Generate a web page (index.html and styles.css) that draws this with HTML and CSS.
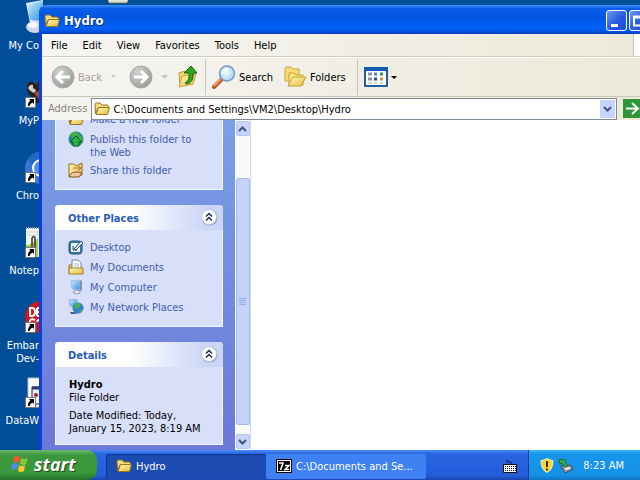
FILE: index.html
```html
<!DOCTYPE html>
<html lang="en">
<head>
    <meta charset="UTF-8">
    <meta name="viewport" content="width=device-width, initial-scale=1.0">
    <title>Hydro</title>
    <link rel="stylesheet" href="styles.css">
</head>
<body>
<!-- shared symbols -->
<svg class="defs" aria-hidden="true">
    <linearGradient id="gFolder" x1="0" y1="0" x2="1" y2="1">
        <stop offset="0" stop-color="#fffbb8"/><stop offset="1" stop-color="#e9b83e"/>
    </linearGradient>
    <radialGradient id="gGray" cx=".35" cy=".3" r=".8">
        <stop offset="0" stop-color="#d2d2cf"/><stop offset="1" stop-color="#989898"/>
    </radialGradient>
    <radialGradient id="gLens" cx=".4" cy=".4" r=".7">
        <stop offset="0" stop-color="#f4fdff"/><stop offset="1" stop-color="#9dcff2"/>
    </radialGradient>
    <linearGradient id="gScreen" x1="0" y1="0" x2="1" y2="1">
        <stop offset="0" stop-color="#d4f5ff"/><stop offset="1" stop-color="#2a8ce4"/>
    </linearGradient>
    <symbol id="folder" viewBox="0 0 16 16">
        <path d="M1 3.5Q1 2 2.5 2H6l2 2h5q1.500 0 1.500 1.500V7H4l-2.500 5.500Z" fill="#f6dc78" stroke="#94701e"/>
        <path d="M4.500 6.500h11l-2 7H2Z" fill="url(#gFolder)" stroke="#9a7420"/>
    </symbol>
    <symbol id="shortcut" viewBox="0 0 11 11">
        <path d="M.5.5h10v10H.5Z" fill="#fff" stroke="#777"/>
        <path d="M4 2h5v5L7.500 5.500Q5 6.500 4.500 9L3 9Q2.500 5.500 5.500 3.500Z" fill="#000"/>
    </symbol>
    <symbol id="chevrons" viewBox="0 0 18 18">
        <circle cx="9.500" cy="9.500" r="8" fill="#8d9ac0"/>
        <circle cx="9" cy="9" r="7.500" fill="#fff" stroke="#c3cbe0"/>
        <path d="M6 8.500l3-3 3 3M6 12.500l3-3 3 3" fill="none" stroke="#1c2a56" stroke-width="1.500"/>
    </symbol>
</svg>

<div class="desktop">
    <div class="workspace">
        <nav class="shortcuts" aria-label="Desktop">
            <a class="shortcut" href="#">
                <svg width="32" height="34" viewBox="0 0 32 34"><path d="M1 3l17-3v26L5 23Z" fill="#e9eef5"/><path d="M2 4l16-3v20L5 20Z" fill="url(#gScreen)"/><ellipse cx="10" cy="27" rx="9" ry="6" fill="#d3d5ea"/><ellipse cx="8" cy="25" rx="5" ry="3" fill="#fbfbff"/></svg>
                <span>My Co</span>
            </a>
            <a class="shortcut" href="#">
                <svg width="32" height="34" viewBox="0 0 32 34"><path d="M2 12q1-7 6-5l4 3 2-6v24H9q1-5-3-7-5-3-4-9Z" fill="#2b211f"/><path d="M3 13q2-4 5-3v3l3 2q-1 4-4 2T3 13Z" fill="#d9d2c8"/><path d="M9 18l5-2v8Z" fill="#9a5636"/><use href="#shortcut" y="22" width="11" height="11"/></svg>
                <span>MyP</span>
            </a>
            <a class="shortcut" href="#">
                <svg width="32" height="34" viewBox="0 0 32 34"><circle cx="16" cy="18" r="16" fill="#3b76d5"/><path d="M3 9Q7 3 16 2v9Q9 12 9 20Z" fill="#2866c6"/><circle cx="16" cy="18" r="8" fill="#4c8df2" stroke="#fff" stroke-width="2"/><use href="#shortcut" y="22" width="11" height="11"/></svg>
                <span>Chro</span>
            </a>
            <a class="shortcut" href="#">
                <svg width="32" height="34" viewBox="0 0 32 34"><path d="M1 3h28v29H1Z" fill="#f3f6ee"/><path d="M1 3h28" stroke="#999" stroke-width="2" stroke-dasharray="1 1"/><path d="M2 7h24M2 10h24" stroke="#cbd5cb"/><path d="M1 20q6 0 12-7v19H1Z" fill="#a7cf4b"/><path d="M7 22v-9q2-3 3 0v12" fill="none" stroke="#333" stroke-width="1.500"/><use href="#shortcut" y="22" width="11" height="11"/></svg>
                <span>Notep</span>
            </a>
            <a class="shortcut" href="#">
                <svg width="32" height="34" viewBox="0 0 32 34"><circle cx="16" cy="17" r="16" fill="#cf171d"/><path d="M5 8v8h2q3 0 3-4T7 8ZM12 8v8M12 8h5M12 12h4M12 16h5M10 20q-4-2-5 1t1 5M12 22q1-4 4 0" fill="none" stroke="#fff" stroke-width="2"/><use href="#shortcut" y="22" width="11" height="11"/></svg>
                <span>Embar<br>Dev-</span>
            </a>
            <a class="shortcut" href="#">
                <svg width="32" height="34" viewBox="0 0 32 34"><path d="M3 3h26v29H3Z" fill="#fff" stroke="#bbb"/><path d="M7 12h20v17H7Z" fill="#eef" stroke="#223"/><path d="M7 13h20" stroke="#2e3c68" stroke-width="3"/><circle cx="11" cy="20" r="2" fill="#a22"/><use href="#shortcut" y="22" width="11" height="11"/></svg>
                <span>DataW</span>
            </a>
        </nav>
        <svg class="peek" width="20" height="4" viewBox="0 0 20 4"><path d="M0 0h20l-1 3H1Z" fill="#e6e3cf"/><path d="M1 3h18" stroke="#6d7263"/></svg>

        <main class="window">
            <header class="titlebar">
                <svg width="16" height="16"><use href="#folder"/></svg>
                <h1>Hydro</h1>
                <button class="capBtn" aria-label="Minimize"><svg width="19" height="19"><path d="M4 13h7v3H4Z" fill="#fff"/></svg></button>
                <button class="capBtn" aria-label="Maximize"><svg width="19" height="19"><path d="M4 5.500h10v9H4ZM4 6.500h10" fill="none" stroke="#fff" stroke-width="2"/></svg></button>
                <button class="capBtn close" aria-label="Close"><svg width="19" height="19"><path d="M5 5l9 9M14 5l-9 9" stroke="#fff" stroke-width="2"/></svg></button>
            </header>

            <nav class="menubar">
                <button>File</button>
                <button>Edit</button>
                <button>View</button>
                <button>Favorites</button>
                <button>Tools</button>
                <button>Help</button>
                <div class="throbber"></div>
            </nav>

            <div class="toolbar">
                <button class="tool back" disabled>
                    <svg width="24" height="24"><circle cx="12" cy="12" r="11" fill="url(#gGray)" stroke="#aaa"/><path d="M19 12H7M12 6l-6 6 6 6" fill="none" stroke="#fff" stroke-width="3"/></svg>
                    Back
                </button>
                <svg class="drop off" width="7" height="4"><path d="M1 0h5L3.500 3Z"/></svg>
                <button class="tool" aria-label="Forward" disabled>
                    <svg width="24" height="24"><circle cx="12" cy="12" r="11" fill="url(#gGray)" stroke="#aaa"/><path d="M5 12h12M12 6l6 6-6 6" fill="none" stroke="#fff" stroke-width="3"/></svg>
                </button>
                <svg class="drop off" width="7" height="4"><path d="M0 0h7L3.500 4Z"/></svg>
                <button class="tool" aria-label="Up">
                    <svg width="20" height="24"><path d="M1 8l6-2 2 2 8-1v5L2 20Z" fill="#f3dc72" stroke="#b99a34"/><path d="M4 11l14-2-3 10-14 3Z" fill="url(#gFolder)" stroke="#c7a13a"/><path d="M7 18q5-2 4-10H6l7-7 6 7h-4q1 9-6 11Z" fill="#2fa41f" stroke="#14690f"/></svg>
                </button>
                <div class="divider"></div>
                <button class="tool">
                    <svg width="24" height="24"><path d="M2 22l8-8" stroke="#b3562a" stroke-width="4" stroke-linecap="round"/><path d="M2 21l7-7" stroke="#f09a62" stroke-width="2"/><circle cx="15" cy="8.500" r="7.500" fill="url(#gLens)" stroke="#7794c8" stroke-width="1.500"/><path d="M11 8q1-4 5-4" fill="none" stroke="#fff" stroke-width="2"/></svg>
                    Search
                </button>
                <button class="tool folders">
                    <svg width="23" height="22"><path d="M1 3l1-2h5l2 2h6v12H1Z" fill="#f5dc74" stroke="#c8a235"/><path d="M5 7h5l2 2h7v10H5Z" fill="#f8e68a" stroke="#c8a235"/><path d="M9 11h13l-5 9H4Z" fill="url(#gFolder)" stroke="#c8a235"/></svg>
                    Folders
                </button>
                <div class="divider"></div>
                <button class="tool" aria-label="Views">
                    <svg width="24" height="20"><path d="M1 1h22v18H1Z" fill="#fff" stroke="#1d5fa8" stroke-width="2"/><path d="M0 0h24v4H0Z" fill="#1559b5"/><path d="M4 7h4M4 12h4" stroke="#8d8bab" stroke-width="3"/><path d="M10 7h3" stroke="#4f87b5" stroke-width="3"/><path d="M16 7h3" stroke="#2d9b4c" stroke-width="3"/><path d="M10 12h3" stroke="#204c9f" stroke-width="3"/><path d="M16 12h3" stroke="#c99733" stroke-width="3"/><path d="M4 16h4M10 16h3M16 16h3" stroke="#aaa"/></svg>
                    <svg width="6" height="3"><path d="M0 0h6L3 3Z"/></svg>
                </button>
            </div>

            <form class="addressbar">
                <label for="address">Address</label>
                <div class="combo">
                    <svg width="16" height="16"><use href="#folder"/></svg>
                    <input id="address" type="text" value="C:\Documents and Settings\VM2\Desktop\Hydro">
                    <button type="button" class="comboBtn" aria-label="Show addresses"><svg width="9" height="6"><path d="M1 1l3.500 3.500L8 1" fill="none" stroke="#3d5286" stroke-width="2"/></svg></button>
                </div>
                <button type="button" class="go" aria-label="Go"><svg width="19" height="19"><path d="M0 0h19v19H0Z" fill="#2c9638"/><path d="M3 9.500h11M9 4l6 5.500L9 15" fill="none" stroke="#fff" stroke-width="2"/></svg></button>
            </form>

            <div class="client">
                <aside class="pane">
                    <section class="group">
                        <div class="links">
                            <a href="#"><svg width="16" height="16"><use href="#folder"/></svg><span>Make a new folder</span></a>
                            <a href="#"><svg width="16" height="16"><circle cx="8" cy="8" r="7.500" fill="#2e7f9c"/><path d="M1 5q3-5 8-4l2 3-4 3-4-1ZM11 3l4 4-2 6-3-4Z" fill="#3faf46"/><path d="M8 5l6 6h-3v4H5v-4H2Z" fill="#25b73a" stroke="#0d5c25"/></svg><span>Publish this folder to the Web</span></a>
                            <a href="#"><svg width="16" height="16"><path d="M1 2h5l2 2 6-3v12l-13 2Z" fill="url(#gFolder)" stroke="#8d6b24"/><path d="M1 14q3-5 8-4l5 1-3 4H3Z" fill="#f2c79b" stroke="#7d5730"/><path d="M5 6h7M10 4l3 2-3 3" fill="none" stroke="#a3702a"/></svg><span>Share this folder</span></a>
                        </div>
                    </section>
                    <section class="group">
                        <header><h2>Other Places</h2><button class="collapse" aria-label="Collapse Other Places"><svg width="18" height="18"><use href="#chevrons"/></svg></button></header>
                        <div class="links">
                            <a href="#"><svg width="16" height="16"><rect x="1" y="2" width="13" height="13" rx="3" fill="#3b7ba8" stroke="#27567e"/><rect x="3" y="4" width="9" height="9" rx="1" fill="#eef7ff"/><path d="M5 7v4h4M6 10l7-8 2 2-7 7Z" fill="#cfe6f5" stroke="#2c5575"/></svg><span>Desktop</span></a>
                            <a href="#"><svg width="16" height="16"><path d="M1 6h4V14H1Z" fill="#f0cc55" stroke="#a07d22"/><path d="M4 1h6l3 3v9H4Z" fill="#fff" stroke="#7784a0"/><path d="M6 5h5M6 7h5" stroke="#a9b6cf"/><path d="M1 9h14v6H1Z" fill="url(#gFolder)" stroke="#a07d22"/></svg><span>My Documents</span></a>
                            <a href="#"><svg width="16" height="16"><path d="M3 2l9-1v10l-8-1Z" fill="url(#gScreen)" stroke="#a9bdd6"/><path d="M12 1l2 1v9l-2 1Z" fill="#8290b0"/><path d="M5 13l3-2 4 1v2l-4 1Z" fill="#e6e8f3" stroke="#8d95b4"/></svg><span>My Computer</span></a>
                            <a href="#"><svg width="16" height="16"><path d="M1 1l8-1v8L2 7Z" fill="url(#gScreen)" stroke="#9db4cf"/><circle cx="10" cy="9" r="5.500" fill="#2f7fd0"/><path d="M6 6q4-4 7-1l-2 4-4 1ZM11 11l4-1-3 4Z" fill="#49b052"/><path d="M2 13h4l3 2H3Z" fill="#4d5d7c"/></svg><span>My Network Places</span></a>
                        </div>
                    </section>
                    <section class="group">
                        <header><h2>Details</h2><button class="collapse" aria-label="Collapse Details"><svg width="18" height="18"><use href="#chevrons"/></svg></button></header>
                        <div class="details">
                            <p><strong>Hydro</strong><br>File Folder</p>
                            <p>Date Modified: Today, January 15, 2023, 8:19 AM</p>
                        </div>
                    </section>
                </aside>
                <div class="scrollbar">
                    <button class="arrow" aria-label="Scroll up"><svg width="9" height="6"><path d="M1 5l3.500-3.500L8 5" fill="none" stroke="#3d5286" stroke-width="2"/></svg></button>
                    <div class="thumb"><svg width="7" height="8"><path d="M0 .5h7M0 2.500h7M0 4.500h7M0 6.500h7" stroke="#94aee8"/></svg></div>
                    <button class="arrow" aria-label="Scroll down"><svg width="9" height="6"><path d="M1 1l3.500 3.500L8 1" fill="none" stroke="#3d5286" stroke-width="2"/></svg></button>
                </div>
                <div class="files"></div>
            </div>
        </main>
    </div>

    <footer class="taskbar">
        <button class="start">
            <svg width="18" height="18" viewBox="0 0 18 18"><path d="M3 2q3-2 6 0L8 8Q5 6 2 8Z" fill="#ee5a2b"/><path d="M10 3q3 2 7 0l-2 6q-3 2-6 0Z" fill="#86c93c"/><path d="M1 9q3-2 6 0l-1 6Q3 13 0 15Z" fill="#4b8ff0"/><path d="M8 10q3 2 6 0l-1 6q-3 2-6 0Z" fill="#fbc92d"/></svg>
            start
        </button>
        <button class="task active"><svg width="16" height="16"><use href="#folder"/></svg><span>Hydro</span></button>
        <button class="task"><svg width="16" height="14"><path d="M0 0h16v14H0Z" fill="#000"/><path d="M1 1h14v12H1Z" fill="#fff"/><path d="M2 2h12v10H2Z" fill="#000"/><path d="M3 4h4L4.500 11M9 6.500h4l-4 4h4" fill="none" stroke="#fff" stroke-width="1.500"/></svg><span>C:\Documents and Se...</span></button>
        <svg class="keyboard" width="14" height="13"><path d="M4 0v2h4v2" fill="none" stroke="#111a3c"/><path d="M.5 4.500h13v8H.5Z" fill="#fff" stroke="#111"/><path d="M2 6.500h11M2 8.500h11M2 10.500h11" stroke="#111" stroke-dasharray="1 1"/></svg>
        <div class="tray">
            <svg width="14" height="15"><path d="M7 .5q3 2 6 2 0 9-6 12Q1 11.500 1 2.500q3 0 6-2Z" fill="#fcd52e" stroke="#f6f0c0"/><path d="M7 3v6M7 10.500v2" stroke="#3a2a08" stroke-width="2"/></svg>
            <svg width="15" height="15"><path d="M3 8l9-1 3 4-8 4Z" fill="#9099a3" stroke="#3c4a58"/><path d="M7 11l5-1" stroke="#e8edf2" stroke-width="2"/><path d="M1 1l7 1-1 2 3 4-3 1-3-4-2 1Z" fill="#35b044" stroke="#1c7130"/></svg>
            <time>8:23 AM</time>
        </div>
    </footer>
</div>
</body>
</html>
```
FILE: styles.css
```css
* {
    box-sizing: border-box;
}
body {
    margin: 0;
    font: 11px/13px "DejaVu Sans Condensed", "DejaVu Sans", sans-serif;
    color: #000;
}
button, input {
    font: inherit;
    color: inherit;
    margin: 0;
    padding: 0;
    border: 0;
    background: none;
}
svg {
    display: block;
    flex: none;
}
a {
    text-decoration: none;
}
h1, h2, p {
    margin: 0;
}
.defs {
    position: absolute;
    width: 0;
    height: 0;
}
.desktop {
    display: flex;
    flex-direction: column;
    height: 100vh;
    overflow: hidden;
    background: #034e98;
}
.workspace {
    position: relative;
    flex: 1;
    min-height: 0;
    overflow: hidden;
}

/* desktop icons, partly under the window */
.shortcuts {
    display: grid;
    grid-template-columns: minmax(0, 1fr);
    grid-auto-rows: 75px;
    width: 39px;
}
.shortcut {
    display: flex;
    flex-direction: column;
    align-items: flex-end;
    gap: 5px;
    color: #fff;
    text-align: right;
}
.shortcut svg {
    margin-right: -18px;
}
.shortcut span {
    white-space: nowrap;
}
.peek {
    position: absolute;
    left: 108px;
    top: 0;
}

.window {
    position: absolute;
    left: 39px;
    right: -38px;
    top: 5px;
    bottom: 0;
    display: flex;
    flex-direction: column;
    padding: 0 3px;
    border-radius: 8px 8px 0 0;
    background: #0b3fe0;
    overflow: hidden;
}
.titlebar {
    display: flex;
    align-items: center;
    gap: 2px;
    height: 29px;
    margin: 0 -3px;
    padding: 2px 5px 0;
    background: linear-gradient(#3f94fb, #0a5fe9 12%, #0054e0 45%, #0062fb 80%, #0050dc 93%, #0038b8);
    color: #fff;
}
.titlebar h1 {
    flex: 1;
    padding-left: 2px;
    font-size: 13px;
    line-height: 16px;
    text-shadow: 1px 1px #0a2c8a;
}
.capBtn {
    width: 21px;
    height: 21px;
    border: 1px solid #fff;
    border-radius: 3px;
    background: linear-gradient(135deg, #6d9bf3, #2a5de0 50%, #1f4fd0);
}
.close {
    background: #d9482a;
}

.menubar {
    display: flex;
    height: 23px;
    padding-left: 1px;
    background: linear-gradient(90deg, #f6f5f2, #ece9d8);
    border-bottom: 1px solid #d0cdbd;
}
.menubar button {
    padding: 0 8px 0 7px;
}
.menubar button:first-child {
    padding-left: 8px;
}
.throbber {
    width: 42px;
    margin-left: auto;
    border-left: 1px solid #c5c2b2;
    background: #fff;
}

.toolbar {
    display: flex;
    align-items: center;
    height: 40px;
    padding-left: 9px;
    background: linear-gradient(90deg, #f5f4f1, #ece9d8);
    border-top: 1px solid #fff;
    border-bottom: 1px solid #c9c6b8;
}
.tool {
    display: flex;
    align-items: center;
    gap: 3px;
}
.back {
    padding-right: 8px;
}
.tool:disabled {
    color: #a3a19a;
}
.drop {
    margin-right: 12px;
}
.drop:not(.back + .drop) {
    margin: 0 10px 0 8px;
}
.off {
    fill: #c8c6bd;
}
.divider {
    width: 1px;
    height: 36px;
    margin: 0 6px 0 7px;
    background: #c5c2b4;
}
.folders {
    margin: 0 4px 0 11px;
}

.addressbar {
    display: flex;
    align-items: center;
    gap: 4px;
    height: 23px;
    padding: 0 33px 0 6px;
    background: linear-gradient(90deg, #f4f3ef, #ece9d8);
}
.addressbar label {
    color: #85837b;
}
.combo {
    display: flex;
    align-items: center;
    gap: 3px;
    flex: 1;
    height: 22px;
    padding: 0 1px 0 2px;
    border: 1px solid #7f8c9c;
    background: #fff;
}
.combo input {
    flex: 1;
    min-width: 0;
    padding-top: 2px;
}
.comboBtn {
    display: flex;
    align-items: center;
    justify-content: center;
    width: 15px;
    height: 18px;
    background: #c6d5fb;
}
.go {
    margin-left: 2px;
}

.client {
    display: flex;
    flex: 1;
    min-height: 0;
    background: #fff;
}
/* scrolled to the bottom, so the first group runs out at the top */
.pane {
    display: flex;
    flex-direction: column;
    justify-content: flex-end;
    gap: 15px;
    width: 193px;
    padding: 0 12px 5px 13px;
    overflow: hidden;
    background: linear-gradient(#7b9fe6, #6b78d8);
}
.group {
    flex: none;
    border: 1px solid #f4f7ff;
    border-top: 0;
    border-radius: 4px 4px 0 0;
    background: #d8dff8;
}
.group header {
    display: flex;
    align-items: center;
    justify-content: space-between;
    height: 25px;
    margin: 0 -1px;
    padding: 0 5px 2px 13px;
    border-radius: 4px 4px 0 0;
    background: linear-gradient(90deg, #fff 45%, #cad5f7 90%);
}
.group h2 {
    padding-top: 4px;
    font-size: 11px;
    line-height: 13px;
    color: #2a5cba;
}
.links {
    display: flex;
    flex-direction: column;
    gap: 3px;
    padding: 9px 24px 10px 12px;
}
.links a {
    display: flex;
    gap: 6px;
    min-height: 17px;
    color: #3f5db0;
}
.links span {
    padding-top: 2px;
}
.details {
    display: flex;
    flex-direction: column;
    gap: 5px;
    padding: 11px 13px 9px;
}

.scrollbar {
    display: flex;
    flex-direction: column;
    align-items: center;
    width: 16px;
    padding: 1px 0;
    border-right: 1px solid #d5dbe8;
    background: #fafaf6;
}
.arrow {
    display: flex;
    align-items: center;
    justify-content: center;
    width: 14px;
    height: 15px;
    border: 1px solid #b4c5f0;
    border-radius: 2px;
    background: #c8d6fb;
}
.thumb {
    display: flex;
    align-items: center;
    justify-content: center;
    flex: 1;
    width: 14px;
    margin: 42px 0 9px;
    border: 1px solid #a5bbee;
    border-radius: 2px;
    background: #c5d3fb;
}
.files {
    flex: 1;
}

.taskbar {
    display: flex;
    align-items: center;
    height: 30px;
    color: #fff;
    background: linear-gradient(#4a8df5, #2a66e2 12%, #245cda 85%, #1c45ae);
}
.start {
    display: flex;
    align-items: center;
    gap: 5px;
    width: 97px;
    height: 30px;
    margin-right: 9px;
    padding: 0 0 2px 11px;
    border-radius: 0 10px 10px 0;
    background: linear-gradient(#6cb96a, #3b973c 18%, #3a9a3b 75%, #26702a);
    font: italic bold 18px/22px "Open Sans", sans-serif;
    text-shadow: 1px 1px 1px #1c421c;
}
.task {
    display: flex;
    align-items: center;
    gap: 4px;
    flex: 0 1 160px;
    min-width: 0;
    height: 25px;
    margin-top: 2px;
    padding: 0 10px;
    border-radius: 2px;
    background: #3f80f2;
    white-space: nowrap;
}
.active {
    background: #1c4bb2;
    box-shadow: inset 1px 1px 1px #12368a;
}
.keyboard {
    margin: 2px 11px 0 auto;
}
.tray {
    display: flex;
    align-items: center;
    gap: 4px;
    height: 30px;
    padding: 0 16px 0 11px;
    border-left: 1px solid #0b3d96;
    background: linear-gradient(#3cb4f8, #1795ea 14%, #1592e8 85%, #1173c0);
}
.tray time {
    padding-left: 6px;
}
```
